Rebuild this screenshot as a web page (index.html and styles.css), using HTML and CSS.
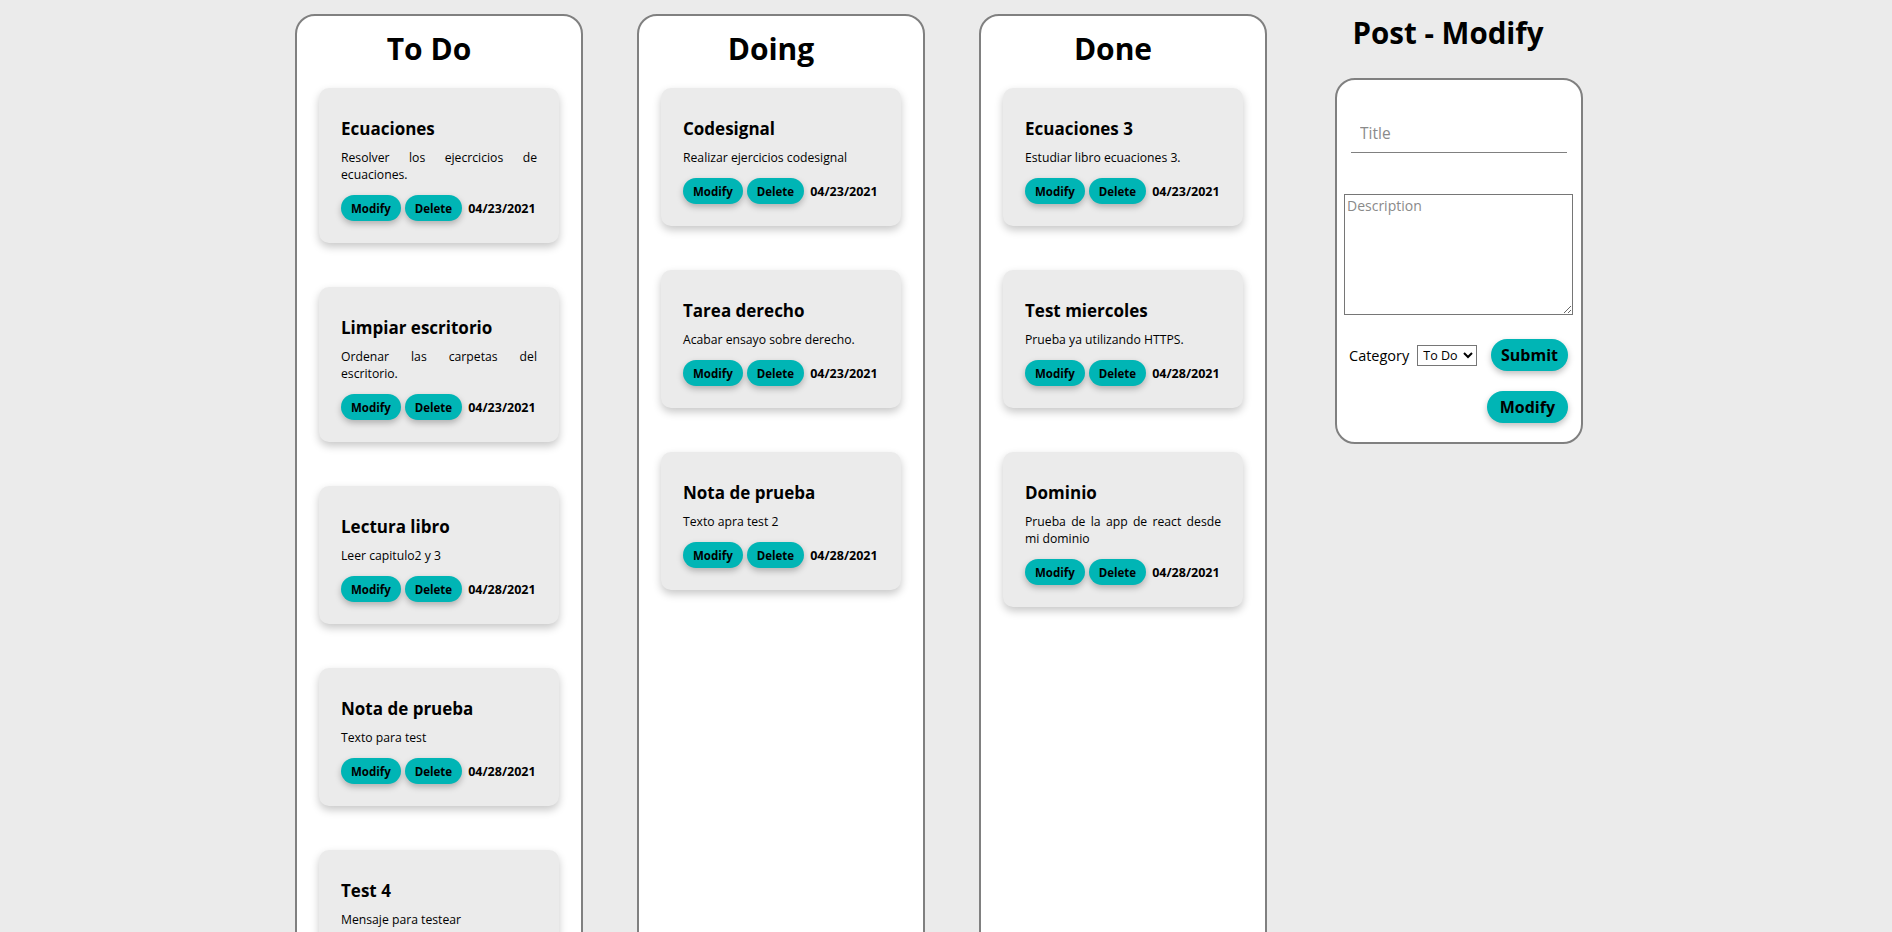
FILE: index.html
```html
<!DOCTYPE html>
<html lang="es">
<head>
<meta charset="utf-8">
<title>Kanban</title>
<link rel="stylesheet" href="styles.css">
</head>
<body>
<div class="board">
  <section class="column">
    <h1 class="column-title">To Do</h1>
    <div class="cards">
      <div class="card">
        <h3 class="card-title">Ecuaciones</h3>
        <p class="card-desc">Resolver los ejecrcicios de ecuaciones.</p>
        <div class="card-actions"><button class="btn">Modify</button><button class="btn">Delete</button><span class="date">04/23/2021</span></div>
      </div>
      <div class="card">
        <h3 class="card-title">Limpiar escritorio</h3>
        <p class="card-desc">Ordenar las carpetas del escritorio.</p>
        <div class="card-actions"><button class="btn">Modify</button><button class="btn">Delete</button><span class="date">04/23/2021</span></div>
      </div>
      <div class="card">
        <h3 class="card-title">Lectura libro</h3>
        <p class="card-desc">Leer capitulo2 y 3</p>
        <div class="card-actions"><button class="btn">Modify</button><button class="btn">Delete</button><span class="date">04/28/2021</span></div>
      </div>
      <div class="card">
        <h3 class="card-title">Nota de prueba</h3>
        <p class="card-desc">Texto para test</p>
        <div class="card-actions"><button class="btn">Modify</button><button class="btn">Delete</button><span class="date">04/28/2021</span></div>
      </div>
      <div class="card">
        <h3 class="card-title">Test 4</h3>
        <p class="card-desc">Mensaje para testear</p>
        <div class="card-actions"><button class="btn">Modify</button><button class="btn">Delete</button><span class="date">04/28/2021</span></div>
      </div>
    </div>
  </section>
  <section class="column">
    <h1 class="column-title">Doing</h1>
    <div class="cards">
      <div class="card">
        <h3 class="card-title">Codesignal</h3>
        <p class="card-desc">Realizar ejercicios codesignal</p>
        <div class="card-actions"><button class="btn">Modify</button><button class="btn">Delete</button><span class="date">04/23/2021</span></div>
      </div>
      <div class="card">
        <h3 class="card-title">Tarea derecho</h3>
        <p class="card-desc">Acabar ensayo sobre derecho.</p>
        <div class="card-actions"><button class="btn">Modify</button><button class="btn">Delete</button><span class="date">04/23/2021</span></div>
      </div>
      <div class="card">
        <h3 class="card-title">Nota de prueba</h3>
        <p class="card-desc">Texto apra test 2</p>
        <div class="card-actions"><button class="btn">Modify</button><button class="btn">Delete</button><span class="date">04/28/2021</span></div>
      </div>
    </div>
  </section>
  <section class="column">
    <h1 class="column-title">Done</h1>
    <div class="cards">
      <div class="card">
        <h3 class="card-title">Ecuaciones 3</h3>
        <p class="card-desc">Estudiar libro ecuaciones 3.</p>
        <div class="card-actions"><button class="btn">Modify</button><button class="btn">Delete</button><span class="date">04/23/2021</span></div>
      </div>
      <div class="card">
        <h3 class="card-title">Test miercoles</h3>
        <p class="card-desc">Prueba ya utilizando HTTPS.</p>
        <div class="card-actions"><button class="btn">Modify</button><button class="btn">Delete</button><span class="date">04/28/2021</span></div>
      </div>
      <div class="card">
        <h3 class="card-title">Dominio</h3>
        <p class="card-desc">Prueba de la app de react desde mi dominio</p>
        <div class="card-actions"><button class="btn">Modify</button><button class="btn">Delete</button><span class="date">04/28/2021</span></div>
      </div>
    </div>
  </section>
  <section class="editor">
    <h2 class="editor-title">Post - Modify</h2>
    <form class="editor-form">
      <input class="title-input" type="text" placeholder="Title">
      <textarea class="desc-input" placeholder="Description"></textarea>
      <div class="form-row">
        <label class="category">Category
          <select class="category-select">
            <option>To Do</option>
            <option>Doing</option>
            <option>Done</option>
          </select>
        </label>
        <button type="button" class="btn btn-large">Submit</button>
      </div>
      <div class="form-row form-row-end">
        <button type="button" class="btn btn-large btn-wide">Modify</button>
      </div>
    </form>
  </section>
</div>
</body>
</html>
```
FILE: styles.css
```css
* { box-sizing: border-box; }

body {
  margin: 0;
  background: #ebebeb;
  font-family: "Open Sans", "Noto Sans", sans-serif;
  color: #000;
}

.board {
  display: flex;
  align-items: flex-start;
  padding: 14px 0 0 295px;
}

.column {
  width: 288px;
  min-height: 1100px;
  margin-right: 54px;
  background: #fff;
  border: 2px solid #808080;
  border-radius: 20px;
  padding-bottom: 40px;
}

.column-title {
  margin: 0;
  padding: 14px 20px 0 0;
  font-size: 30px;
  line-height: 38px;
  font-weight: 700;
  text-align: center;
}

.cards {
  display: flex;
  flex-direction: column;
  align-items: center;
  gap: 44px;
  padding-top: 20px;
}

.card {
  width: 240px;
  background: #ebebeb;
  border-radius: 10px;
  padding: 29px 22px 22px;
  box-shadow: 0 4px 8px rgba(0, 0, 0, 0.22);
}

.card-title {
  margin: 0;
  font-size: 17px;
  line-height: 24px;
  font-weight: 700;
}

.card-desc {
  margin: 8px 0 12px;
  font-size: 12.2px;
  line-height: 17px;
  text-align: justify;
}

.card-actions {
  display: flex;
  align-items: center;
  gap: 4px;
}

.btn {
  border: none;
  background: #00b5b5;
  color: #000;
  font-family: inherit;
  font-weight: 700;
  font-size: 11.5px;
  height: 26px;
  padding: 0 10px;
  border-radius: 13px;
  box-shadow: 0 3px 6px rgba(0, 0, 0, 0.25);
  cursor: pointer;
}

.date {
  margin-left: 2px;
  font-size: 12.5px;
  font-weight: 700;
}

.editor {
  display: flex;
  flex-direction: column;
  margin-left: 14px;
}

.editor-title {
  margin: 0;
  padding: 0 22px 0 0;
  font-size: 29.5px;
  line-height: 38px;
  font-weight: 700;
  text-align: center;
}

.editor-form {
  width: 248px;
  margin-top: 26px;
  background: #fff;
  border: 2px solid #808080;
  border-radius: 20px;
  padding: 28px 13px 19px 7px;
  display: flex;
  flex-direction: column;
}

.title-input {
  margin: 0 0 41px 7px;
  width: 216px;
  height: 45px;
  border: none;
  border-bottom: 1px solid #808080;
  padding: 6px 9px 0;
  font-family: inherit;
  font-size: 15.5px;
  outline: none;
}

.title-input::placeholder { color: #8a8a8a; }

.desc-input {
  width: 229px;
  height: 121px;
  margin: 0;
  border: 1px solid #767676;
  padding: 1px 2px;
  font-family: inherit;
  font-size: 14px;
  resize: vertical;
}

.desc-input::placeholder { color: #8a8a8a; }

.form-row {
  display: flex;
  align-items: center;
  justify-content: space-between;
  margin-top: 24px;
  padding-left: 5px;
}

.form-row-end {
  justify-content: flex-end;
  margin-top: 20px;
}

.category {
  font-size: 14.5px;
  display: flex;
  align-items: center;
  gap: 8px;
}

.category-select {
  font-family: inherit;
  font-size: 12.5px;
  height: 21px;
  width: 60px;
  border: 1px solid #767676;
  background: #fff;
  padding: 0 1px;
}

.btn-large {
  font-size: 16px;
  height: 32px;
  padding: 0 10px;
  border-radius: 16px;
}

.btn-wide {
  padding: 0 13px;
}
```
